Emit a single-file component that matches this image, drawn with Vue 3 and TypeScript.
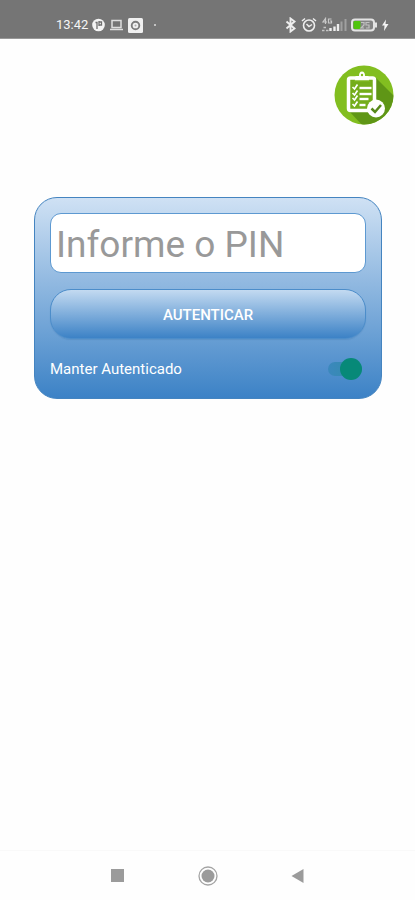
<script setup lang="ts">
import { ref } from 'vue'

interface CheckRow {
  y: number
  length: number
}

const pin = ref<string>('')
const keepSignedIn = ref<boolean>(true)
const rows: CheckRow[] = [
  { y: 22, length: 12 },
  { y: 28, length: 12 },
  { y: 33, length: 9 },
  { y: 39, length: 6 },
]
</script>

<template>
  <div class="screen">
    <header class="status">
      <div class="status-group">
        <span class="clock">13:42</span>
        <svg class="icon" width="13" height="14" viewBox="0 0 13 14" aria-hidden="true">
          <circle cx="6.500" cy="7" r="6.300" fill="#f4f4f4" />
          <path d="M5 11V4.500H3.500M7 3v5M7 4h2.500v3H7" fill="none" stroke="#707070" stroke-width="1.300" />
        </svg>
        <svg class="icon" width="15" height="14" viewBox="0 0 15 14" aria-hidden="true">
          <path d="M3 2.500h9v7H3zM1 11.500h13" fill="none" stroke="#dedede" stroke-width="1.500" />
        </svg>
        <svg class="icon" width="15" height="15" viewBox="0 0 15 15" aria-hidden="true">
          <rect width="15" height="15" rx="1.500" fill="#f0f0f0" />
          <circle cx="7.500" cy="7.500" r="3.800" fill="none" stroke="#7c7c7c" stroke-width="1.900" />
          <circle cx="7.500" cy="7.500" r="1" fill="#aaa" />
        </svg>
        <span class="dot"></span>
      </div>
      <div class="status-group">
        <svg class="icon" width="12" height="16" viewBox="0 0 12 16" aria-hidden="true">
          <path d="M1.500 4.500l8 7-4 3v-13l4 3-8 7" fill="none" stroke="#eee" stroke-width="1.900" />
        </svg>
        <svg class="icon" width="16" height="16" viewBox="0 0 16 16" aria-hidden="true">
          <circle cx="8" cy="8.500" r="5.500" fill="none" stroke="#eee" stroke-width="1.600" />
          <path d="M1 4l3-2.500M15 4l-3-2.500M5.500 7l2.500 2.500 3-2" fill="none" stroke="#eee" stroke-width="1.500" />
        </svg>
        <svg class="icon" width="26" height="16" viewBox="0 0 26 16" aria-hidden="true">
          <path d="M4.500 7V1.500L2 5h4M10.500 2H7.500v4h3V4H9" fill="none" stroke="#c8c8c8" stroke-width="1.200" />
          <path d="M1 13.500h2.500M5 13.500h2.500M2.500 10.500h2.500" stroke="#c4c4c4" stroke-width="1.500" />
          <path d="M9.500 14v-3M13.500 14V9.500M17 14V7" stroke="#eee" stroke-width="2.400" />
          <path d="M20.500 14V4.500M24.500 14V2" stroke="#a0a0a0" stroke-width="2" />
        </svg>
        <svg class="icon" width="26" height="14" viewBox="0 0 26 14" aria-hidden="true">
          <rect x="1" y="1.500" width="22" height="11" rx="3" fill="#858585" stroke="#e4e4e4" stroke-width="2" />
          <path d="M25 4.500v5" stroke="#e4e4e4" stroke-width="2" />
          <rect x="2.500" y="3" width="7" height="8" rx="1" fill="#50c40e" />
          <path d="M10 4.500h3v2.500l-3 3h3M18.500 4.500H15v2.500h3v3h-3" fill="none" stroke="#c0c0c0" stroke-width="1.200" />
        </svg>
        <svg class="icon" width="8" height="14" viewBox="0 0 8 14" aria-hidden="true">
          <path d="M5 1.500L1 7.500h2.500L3 13l4.500-7H4.500z" fill="#f4f4f4" />
        </svg>
      </div>
    </header>

    <main class="content">
      <svg class="logo" width="60" height="60" viewBox="0 0 60 60" role="img" aria-label="Checklist">
        <defs>
          <clipPath id="disc"><circle cx="30" cy="30" r="29.500" /></clipPath>
        </defs>
        <circle cx="30" cy="30" r="29.500" fill="#82be20" />
        <path d="M42 13L62 33v29H30L14 45z" fill="#5f9616" clip-path="url(#disc)" />
        <rect x="14.500" y="13" width="26" height="32.500" rx="2" fill="#74ad1b" stroke="#fff" stroke-width="3.500" />
        <path d="M21 15.500v-3q0-1.500 1.500-1.500H25q0-4.500 3-4.500t3 4.500h2.500q1.500 0 1.500 1.500v3z" fill="#fff" />
        <circle cx="28" cy="10" r="1.200" fill="#82be20" />
        <path d="M20 16h16" stroke="#82be20" stroke-width="1" />
        <g fill="none" stroke="#fff">
          <g v-for="row in rows" :key="row.y">
            <path :d="`M18.500 ${row.y}l2 2 3-4.500`" stroke-width="1.700" />
            <path :d="`M25.500 ${row.y + 1}h${row.length}`" stroke-width="2.400" />
          </g>
        </g>
        <circle cx="42" cy="43.500" r="9" fill="#fff" />
        <path d="M37.500 43.500l3.500 3.500 6-7" fill="none" stroke="#57891a" stroke-width="2.500" />
      </svg>

      <form class="card" @submit.prevent>
        <input v-model="pin" class="pin" type="password" inputmode="numeric" placeholder="Informe o PIN" aria-label="Informe o PIN" />
        <button class="submit" type="submit">AUTENTICAR</button>
        <div class="keep">
          <label for="keep">Manter Autenticado</label>
          <input id="keep" v-model="keepSignedIn" class="switch" type="checkbox" role="switch" />
        </div>
      </form>
    </main>

    <nav class="system" aria-label="Sistema">
      <button type="button" aria-label="Recentes">
        <svg width="20" height="20" viewBox="0 0 20 20"><rect x="3" y="3" width="13" height="13" fill="#9b9b9b" /></svg>
      </button>
      <button type="button" aria-label="Início">
        <svg width="20" height="20" viewBox="0 0 20 20">
          <circle cx="10" cy="10" r="9" fill="none" stroke="#a4a4a4" stroke-width="1.300" />
          <circle cx="10" cy="10" r="6.500" fill="#9b9b9b" />
        </svg>
      </button>
      <button type="button" aria-label="Voltar">
        <svg width="20" height="20" viewBox="0 0 20 20"><path d="M15.500 3v14L3.500 10z" fill="#9b9b9b" /></svg>
      </button>
    </nav>
  </div>
</template>

<style>
body {
  background: #fefefe;
}
</style>

<style scoped>
.screen {
  display: flex;
  flex-direction: column;
  min-height: 100vh;
  font-family: Roboto, "Liberation Sans", sans-serif;
}

.status {
  display: flex;
  justify-content: space-between;
  box-sizing: border-box;
  height: 39px;
  padding: 12px 26px 0 56px;
  background: #757575;
  border-bottom: 1px solid #989898;
}

.status-group {
  display: flex;
  align-items: center;
  gap: 4px;
  height: 26px;
}

.icon {
  flex: none;
}

.clock {
  color: #f6f6f6;
  font-size: 13px;
  line-height: 26px;
}

.dot {
  width: 2px;
  height: 2px;
  margin-left: 7px;
  border-radius: 50%;
  background: #ddd;
}

.content {
  display: flex;
  flex: 1;
  flex-direction: column;
  padding: 26px 33px 0 34px;
}

.logo {
  align-self: flex-end;
  margin-right: -12px;
}

.card {
  display: flex;
  flex-direction: column;
  box-sizing: border-box;
  margin-top: 72px;
  padding: 15px;
  border: 1px solid #4484c0;
  border-radius: 23px;
  background: linear-gradient(#cfe1f4, #3c82c6);
}

.pin {
  box-sizing: border-box;
  width: 100%;
  height: 60px;
  padding: 3px 5px 0;
  border: 1px solid #5d99d1;
  border-radius: 11px;
  background: #fff;
  color: #555;
  font: 400 37px Roboto, "Liberation Sans", sans-serif;
}

.pin::placeholder {
  color: #999;
  opacity: 1;
}

.submit {
  height: 50px;
  margin-top: 16px;
  padding: 2px 0 0;
  border: 1px solid #4c8dca;
  border-radius: 21px;
  background: linear-gradient(#c3daf1, #3c82c6);
  box-shadow: 0 1px 1px #2864a033;
  color: #fff;
  font: 500 15px Roboto, "Liberation Sans", sans-serif;
}

.keep {
  display: flex;
  align-items: center;
  justify-content: space-between;
  margin-top: 16px;
  padding-right: 4px;
  color: #fff;
  font-size: 15px;
  line-height: 28px;
}

.switch {
  display: flex;
  align-items: center;
  width: 34px;
  height: 14px;
  margin: 0;
  appearance: none;
  border-radius: 7px;
  background: linear-gradient(90deg, #3b88bd, #328da6);
}

.switch::before {
  width: 22px;
  height: 22px;
  border-radius: 50%;
  background: #ececec;
  content: "";
}

.switch:checked::before {
  margin-left: auto;
  background: #078978;
}

.system {
  display: flex;
  justify-content: center;
  gap: 70px;
  box-sizing: border-box;
  height: 50px;
  padding-top: 15px;
  border-top: 1px solid #f9f9f9;
}

.system button {
  display: flex;
  width: 20px;
  height: 20px;
  padding: 0;
  border: 0;
  background: transparent;
}
</style>
